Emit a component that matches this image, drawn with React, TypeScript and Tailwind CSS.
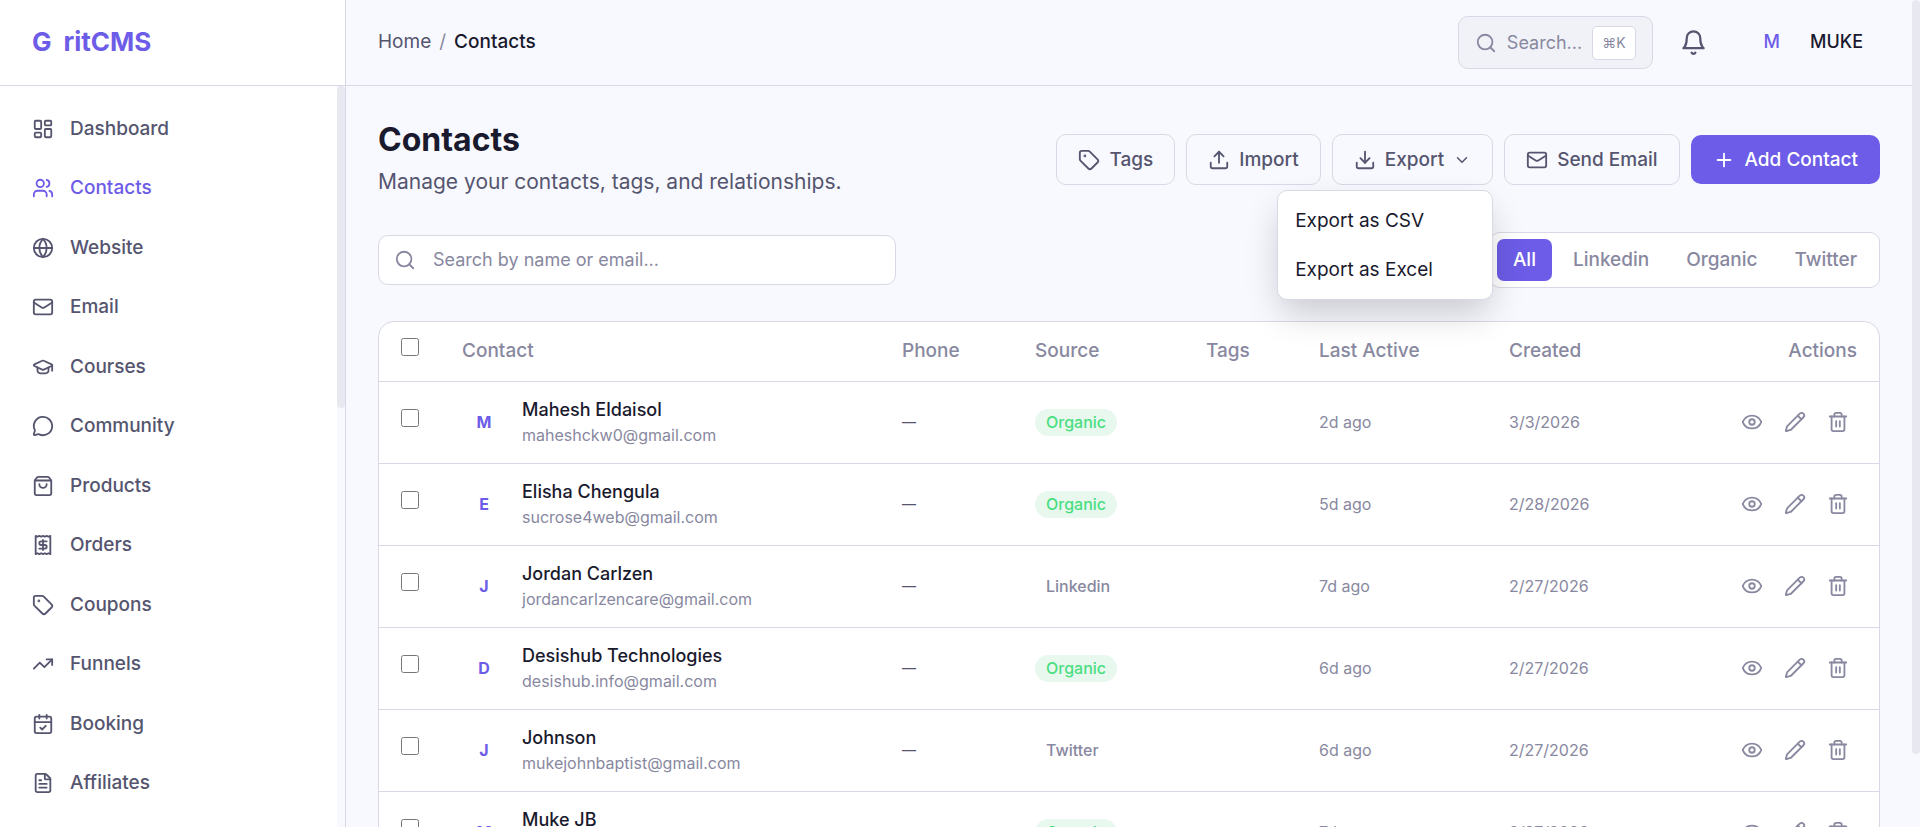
import {
    LayoutDashboard, Users, Globe, Mail, GraduationCap, MessageCircle, ShoppingBag,
    Tag, TrendingUp, CalendarCheck, FileText, Search, Upload, Download,
    ChevronDown, Plus, Eye, Pencil, Trash2,
} from "lucide-react"

type IconProps = { className?: string; strokeWidth?: number }

type Contact = {
    name: string
    email: string
    source: "Organic" | "Linkedin" | "Twitter"
    lastActive: string
    created: string
}

function ReceiptIcon({ className, strokeWidth = 2 }: IconProps) {
    return (
        <svg viewBox="0 0 24 24" fill="none" stroke="currentColor" strokeWidth={strokeWidth} strokeLinecap="round" strokeLinejoin="round" className={className}>
            <path d="M4 2v20l2-1 2 1 2-1 2 1 2-1 2 1 2-1 2 1V2l-2 1-2-1-2 1-2-1-2 1-2-1-2 1Z" />
            <path d="M16 8h-6a2 2 0 1 0 0 4h4a2 2 0 1 1 0 4H8" />
            <path d="M12 17.5v-11" />
        </svg>
    )
}

function BellIcon({ className }: IconProps) {
    return (
        <svg viewBox="0 0 24 24" fill="none" stroke="currentColor" strokeWidth={2} strokeLinecap="round" strokeLinejoin="round" className={className}>
            <path d="M6 8a6 6 0 0 1 12 0c0 7 3 9 3 9H3s3-2 3-9" />
            <path d="M10.3 21a1.94 1.94 0 0 0 3.4 0" />
        </svg>
    )
}

const navItems = [
    { title: "Dashboard", icon: LayoutDashboard },
    { title: "Contacts", icon: Users, active: true },
    { title: "Website", icon: Globe },
    { title: "Email", icon: Mail },
    { title: "Courses", icon: GraduationCap },
    { title: "Community", icon: MessageCircle },
    { title: "Products", icon: ShoppingBag },
    { title: "Orders", icon: ReceiptIcon },
    { title: "Coupons", icon: Tag },
    { title: "Funnels", icon: TrendingUp },
    { title: "Booking", icon: CalendarCheck },
    { title: "Affiliates", icon: FileText },
]

const contacts: Contact[] = [
    { name: "Mahesh Eldaisol", email: "maheshckw0@gmail.com", source: "Organic", lastActive: "2d ago", created: "3/3/2026" },
    { name: "Elisha Chengula", email: "sucrose4web@gmail.com", source: "Organic", lastActive: "5d ago", created: "2/28/2026" },
    { name: "Jordan Carlzen", email: "jordancarlzencare@gmail.com", source: "Linkedin", lastActive: "7d ago", created: "2/27/2026" },
    { name: "Desishub Technologies", email: "desishub.info@gmail.com", source: "Organic", lastActive: "6d ago", created: "2/27/2026" },
    { name: "Johnson", email: "mukejohnbaptist@gmail.com", source: "Twitter", lastActive: "6d ago", created: "2/27/2026" },
    { name: "Muke JB", email: "mukejb@gmail.com", source: "Organic", lastActive: "7d ago", created: "2/27/2026" },
]

const sources = ["All", "Linkedin", "Organic", "Twitter"]

const outlineButton = "flex items-center gap-[9px] rounded-[10px] border border-[#d8d8e6] px-[21px] py-3 text-[19px] leading-[25px] font-medium text-[#55556f]"

export default function App() {
    return (
        <div className="flex h-screen overflow-hidden bg-[#f8f9fe] font-['Inter',sans-serif] text-[#1a1a2e]">
            {/* Sidebar */}
            <aside className="flex w-[346px] shrink-0 flex-col border-r border-[#d8d8e6] bg-white">
                <a href="#" className="flex h-[86px] shrink-0 items-center gap-3 border-b border-[#d8d8e6] px-8 pb-0.5 text-[26px] font-bold text-[#6c5ce7]">
                    <span>G</span>
                    <span>ritCMS</span>
                </a>
                <div className="flex min-h-0 flex-1">
                    <nav className="flex flex-1 flex-col justify-between pt-4 pb-[17px]">
                        {navItems.map((item) => (
                            <a
                                key={item.title}
                                href="#"
                                className={`flex items-center gap-4 px-8 py-3.5 text-[19px] leading-[26px] font-medium ${item.active ? "text-[#6c5ce7]" : "text-[#55556f]"}`}
                            >
                                <item.icon className="size-[22px]" strokeWidth={2} />
                                {item.title}
                            </a>
                        ))}
                    </nav>
                    <div className="w-2 bg-[#f8f9fe]">
                        <div className="h-[322px] rounded-full bg-[#e8e8f0]" />
                    </div>
                </div>
            </aside>

            {/* Main */}
            <div className="flex min-w-0 flex-1 flex-col">
                <header className="flex h-[86px] shrink-0 items-center justify-between border-b border-[#d8d8e6] pr-[49px] pl-8">
                    <div className="flex items-center gap-2 text-[19px]">
                        <a href="#" className="text-[#55556f]">Home</a>
                        <span className="text-[#8888a0]">/</span>
                        <span className="font-medium">Contacts</span>
                    </div>
                    <div className="flex items-center">
                        <button className="flex h-[53px] items-center gap-2.5 rounded-[10px] border border-[#d8d8e6] bg-[#f1f2f8] px-4 text-lg text-[#8888a0]">
                            <Search className="size-[22px]" strokeWidth={2} />
                            Search...
                            <kbd className="flex h-[34px] items-center rounded-[5px] border border-[#d8d8e6] bg-white px-[9px] font-['Inter','DejaVu_Sans',sans-serif] text-sm">⌘K</kbd>
                        </button>
                        <button aria-label="Notifications" className="ml-[27px] text-[#55556f]">
                            <BellIcon className="size-[27px]" />
                        </button>
                        <button className="ml-[57px] flex items-center gap-[30px] pb-0.5 text-lg font-medium">
                            <span className="text-[#6c5ce7]">M</span>
                            <span>MUKE</span>
                        </button>
                    </div>
                </header>

                <main className="flex-1 overflow-hidden px-8 pt-8">
                    <div className="flex items-center justify-between">
                        <div>
                            <h1 className="text-[32px] leading-[44px] font-bold">Contacts</h1>
                            <p className="text-[21px] leading-[39px] text-[#55556f]">Manage your contacts, tags, and relationships.</p>
                        </div>
                        <div className="flex items-center gap-[11px]">
                            <button className={outlineButton}><Tag className="size-[22px]" strokeWidth={2} />Tags</button>
                            <button className={outlineButton}><Upload className="size-[22px]" strokeWidth={2} />Import</button>
                            <div className="relative">
                                <button className={outlineButton} aria-expanded="true">
                                    <Download className="size-[22px]" strokeWidth={2} />
                                    Export
                                    <ChevronDown className="size-[18px]" strokeWidth={2} />
                                </button>
                                <div className="absolute top-full right-0 z-10 mt-[5px] flex w-[216px] flex-col rounded-[10px] border border-[#d8d8e6] bg-white py-[5px] shadow-[0_16px_36px_-4px_rgba(0,0,0,0.2)]">
                                    <button className="px-[17px] py-3 text-left text-[19px] leading-[25px]">Export as CSV</button>
                                    <button className="px-[17px] py-3 text-left text-[19px] leading-[25px]">Export as Excel</button>
                                </div>
                            </div>
                            <button className={outlineButton}><Mail className="size-[22px]" strokeWidth={2} />Send Email</button>
                            <button className="flex items-center gap-2.5 rounded-[10px] bg-[#6c5ce7] px-[22px] py-3 text-[19px] leading-[25px] font-medium text-white">
                                <Plus className="size-[22px]" strokeWidth={2} />Add Contact
                            </button>
                        </div>
                    </div>

                    {/* Filters */}
                    <div className="mt-[31px] flex items-center justify-between">
                        <label className="flex h-[50px] w-[518px] items-center gap-[17px] rounded-[10px] border border-[#d8d8e6] bg-white px-[15px]">
                            <Search className="size-[22px] text-[#8888a0]" strokeWidth={2} />
                            <input type="text" aria-label="Search contacts" placeholder="Search by name or email..." className="min-w-0 flex-1 text-lg outline-none placeholder:text-[#8888a0]" />
                        </label>
                        <div className="flex gap-[5px] rounded-[10px] border border-[#d8d8e6] bg-white p-1.5">
                            {sources.map((source) => (
                                <button
                                    key={source}
                                    className={`rounded-[7px] px-4 py-2 text-[19px] leading-[26px] font-medium ${source === "All" ? "bg-[#6c5ce7] text-white" : "text-[#8888a0]"}`}
                                >
                                    {source}
                                </button>
                            ))}
                        </div>
                    </div>

                    {/* Contacts table */}
                    <div className="mt-[33px] overflow-hidden rounded-2xl border border-[#d8d8e6] bg-white">
                        <table className="w-full table-fixed text-left">
                            <thead>
                                <tr className="h-[59px] border-b border-[#d8d8e6] text-[19px] text-[#8888a0]">
                                    <th className="w-[61px] px-[22px] pb-2"><input type="checkbox" aria-label="Select all contacts" className="block size-[18px]" /></th>
                                    <th className="px-[22px] font-medium">Contact</th>
                                    <th className="w-[133px] px-[22px] font-medium">Phone</th>
                                    <th className="w-[171px] px-[22px] font-medium">Source</th>
                                    <th className="w-[113px] px-[22px] font-medium">Tags</th>
                                    <th className="w-[190px] px-[22px] font-medium">Last Active</th>
                                    <th className="w-[180px] px-[22px] font-medium">Created</th>
                                    <th className="w-[212px] px-[22px] text-right font-medium">Actions</th>
                                </tr>
                            </thead>
                            <tbody>
                                {contacts.map((contact) => (
                                    <tr key={contact.email} className="h-[82px] border-b border-[#d8d8e6] text-base text-[#8888a0]">
                                        <td className="px-[22px] pb-2"><input type="checkbox" aria-label={`Select ${contact.name}`} className="block size-[18px]" /></td>
                                        <td className="px-[22px]">
                                            <div className="flex items-center gap-4">
                                                <span className="w-11 text-center font-bold text-[#6c5ce7]">{contact.name[0]}</span>
                                                <div>
                                                    <p className="text-lg leading-[26px] font-medium text-[#1a1a2e]">{contact.name}</p>
                                                    <p className="leading-6">{contact.email}</p>
                                                </div>
                                            </div>
                                        </td>
                                        <td className="px-[22px] text-sm text-[#55556f]">—</td>
                                        <td className="px-[22px]">
                                            <span className={`inline-block rounded-full px-[11px] leading-[27px] font-medium ${contact.source === "Organic" ? "bg-[#e8f8ef] text-[#4ade80]" : ""}`}>
                                                {contact.source}
                                            </span>
                                        </td>
                                        <td />
                                        <td className="px-[22px]">{contact.lastActive}</td>
                                        <td className="px-[22px]">{contact.created}</td>
                                        <td className="px-[22px]">
                                            <div className="flex justify-end gap-[21px] pr-2">
                                                <button aria-label={`View ${contact.name}`}><Eye className="size-[22px]" strokeWidth={2} /></button>
                                                <button aria-label={`Edit ${contact.name}`}><Pencil className="size-[22px]" strokeWidth={2} /></button>
                                                <button aria-label={`Delete ${contact.name}`}><Trash2 className="size-[22px]" strokeWidth={2} /></button>
                                            </div>
                                        </td>
                                    </tr>
                                ))}
                            </tbody>
                        </table>
                    </div>
                </main>
            </div>

            {/* Page scrollbar */}
            <div className="w-2 shrink-0">
                <div className="h-[754px] rounded-full bg-[#e8e8f0]" />
            </div>
        </div>
    )
}
